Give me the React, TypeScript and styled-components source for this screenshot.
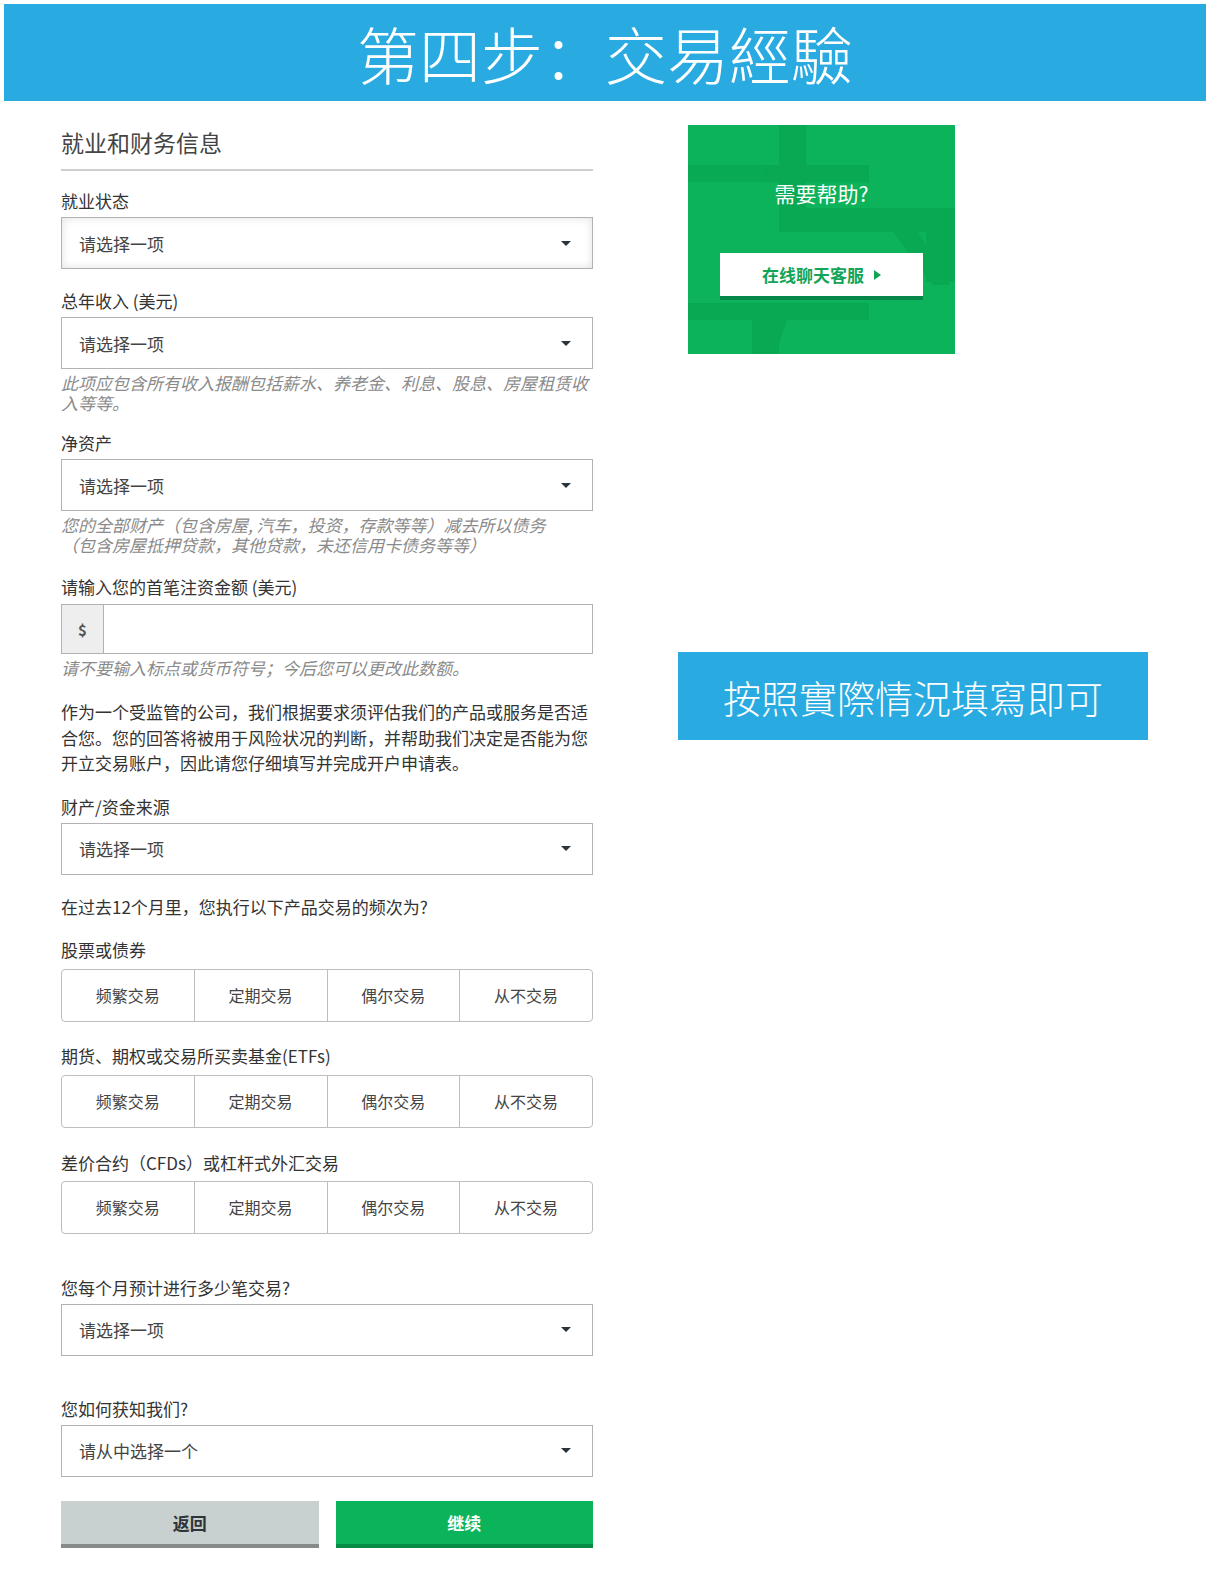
import React from 'react';
import styled, { createGlobalStyle } from 'styled-components';

const GlobalStyle = createGlobalStyle`
  body {
    margin: 0;
    background: #fff;
    font-family: "Noto Sans CJK SC", "Noto Sans", sans-serif;
    color: #333;
  }
`;

const Page = styled.div`
  width: 1208px;
  padding-bottom: 40px;
`;

const HeaderWrap = styled.div`
  padding: 4px 2px 0 4px;
`;

const Header = styled.h1`
  margin: 0;
  height: 97px;
  background: #29abe2;
  color: #fff;
  font-size: 62px;
  font-weight: 300;
  display: flex;
  align-items: center;
  justify-content: center;
`;

const Main = styled.div`
  display: flex;
  padding-left: 61px;
  gap: 85px;
`;

const FormColumn = styled.div`
  width: 532px;
  padding-top: 26px;
`;

const SectionTitle = styled.h2`
  margin: 0;
  font-size: 23px;
  line-height: 30px;
  font-weight: 400;
  color: #444;
`;

const Rule = styled.hr`
  margin: 12px 0 0;
  border: 0;
  height: 2px;
  background: #cfcfcf;
`;

const Label = styled.div<{ $top?: number }>`
  margin-top: ${(p) => p.$top ?? 20}px;
  font-size: 17px;
  line-height: 22px;
  color: #333;
`;

const SelectBox = styled.div<{ $focused?: boolean }>`
  margin-top: 5px;
  height: 52px;
  box-sizing: border-box;
  border: 1px solid #b2b2b2;
  padding: 0 21px 0 17px;
  display: flex;
  align-items: center;
  justify-content: space-between;
  font-size: 17px;
  color: #444;
  box-shadow: ${(p) => (p.$focused ? 'inset 0 0 8px rgba(0, 0, 0, 0.13)' : 'none')};
`;

const Caret = styled.span`
  width: 0;
  height: 0;
  border-left: 5px solid transparent;
  border-right: 5px solid transparent;
  border-top: 5px solid #2a343a;
`;

const Help = styled.div`
  margin-top: 4px;
  font-size: 17px;
  line-height: 20px;
  font-style: italic;
  color: #8a8a8a;
`;

const InputGroup = styled.div`
  margin-top: 6px;
  height: 50px;
  box-sizing: border-box;
  border: 1px solid #b2b2b2;
  display: flex;
`;

const Addon = styled.span`
  width: 41px;
  background: #eeeeee;
  border-right: 1px solid #b2b2b2;
  display: flex;
  align-items: center;
  justify-content: center;
  font-size: 15px;
  font-weight: 700;
  color: #555;
`;

const Paragraph = styled.p`
  margin: 21px 0 0;
  font-size: 17px;
  line-height: 25.5px;
  color: #333;
`;

const Choices = styled.div<{ $top?: number }>`
  margin-top: ${(p) => p.$top ?? 8}px;
  height: 53px;
  box-sizing: border-box;
  border: 1px solid #bdbdbd;
  border-radius: 4px;
  display: flex;
  overflow: hidden;
`;

const Choice = styled.div`
  flex: 1;
  display: flex;
  align-items: center;
  justify-content: center;
  font-size: 16px;
  color: #444;
  & + & {
    border-left: 1px solid #bdbdbd;
  }
`;

const Actions = styled.div`
  margin-top: 24px;
  display: flex;
  gap: 17px;
`;

const ActionButton = styled.div<{ $primary?: boolean }>`
  flex: 1;
  height: 47px;
  box-sizing: border-box;
  display: flex;
  align-items: center;
  justify-content: center;
  font-size: 17px;
  font-weight: 700;
  background: ${(p) => (p.$primary ? '#0bb45a' : '#c8d0d0')};
  color: ${(p) => (p.$primary ? '#fff' : '#2f3438')};
  border-bottom: 4px solid ${(p) => (p.$primary ? '#078c45' : '#858b8b')};
`;

const SideColumn = styled.div`
  display: flex;
  flex-direction: column;
  padding-top: 24px;
`;

const HelpCard = styled.div`
  position: relative;
  margin-left: 10px;
  width: 267px;
  height: 229px;
  background: #0cb35b;
  overflow: hidden;
  display: flex;
  flex-direction: column;
  align-items: center;
  padding-top: 53px;
  box-sizing: border-box;
`;

const CardPattern = styled.svg`
  position: absolute;
  inset: 0;
`;

const CardTitle = styled.div`
  position: relative;
  font-size: 21px;
  line-height: 30px;
  color: #fff;
`;

const ChatButton = styled.div`
  position: relative;
  margin-top: 45px;
  width: 203px;
  height: 47px;
  box-sizing: border-box;
  background: #fff;
  border-bottom: 4px solid #07864a;
  display: flex;
  align-items: center;
  justify-content: center;
  gap: 10px;
  font-size: 17px;
  font-weight: 700;
  color: #12a457;
`;

const PlayMark = styled.span`
  width: 0;
  height: 0;
  border-top: 5px solid transparent;
  border-bottom: 5px solid transparent;
  border-left: 7px solid #12a457;
`;

const Callout = styled.div`
  margin-top: 298px;
  width: 470px;
  height: 88px;
  background: #29abe2;
  color: #fff;
  font-size: 38px;
  font-weight: 300;
  display: flex;
  align-items: center;
  justify-content: center;
`;

const frequencies = ['频繁交易', '定期交易', '偶尔交易', '从不交易'];

const Select = ({ text, focused }: { text: string; focused?: boolean }) => (
  <SelectBox $focused={focused}>
    <span>{text}</span>
    <Caret />
  </SelectBox>
);

const FrequencyRow = ({ top }: { top?: number }) => (
  <Choices $top={top}>
    {frequencies.map((f) => (
      <Choice key={f}>{f}</Choice>
    ))}
  </Choices>
);

export default function App() {
  return (
    <Page>
      <GlobalStyle />
      <HeaderWrap>
        <Header>第四步：交易經驗</Header>
      </HeaderWrap>
      <Main>
        <FormColumn>
          <SectionTitle>就业和财务信息</SectionTitle>
          <Rule />

          <Label $top={19}>就业状态</Label>
          <Select text="请选择一项" focused />

          <Label $top={21}>总年收入 (美元)</Label>
          <Select text="请选择一项" />
          <Help>
            此项应包含所有收入报酬包括薪水、养老金、利息、股息、房屋租赁收
            <br />
            入等等。
          </Help>

          <Label $top={19}>净资产</Label>
          <Select text="请选择一项" />
          <Help>
            您的全部财产（包含房屋, 汽车，投资，存款等等）减去所以债务
            <br />
            （包含房屋抵押贷款，其他贷款，未还信用卡债务等等）
          </Help>

          <Label $top={21}>请输入您的首笔注资金额 (美元)</Label>
          <InputGroup>
            <Addon>$</Addon>
          </InputGroup>
          <Help>请不要输入标点或货币符号；今后您可以更改此数额。</Help>

          <Paragraph>
            作为一个受监管的公司，我们根据要求须评估我们的产品或服务是否适
            <br />
            合您。您的回答将被用于风险状况的判断，并帮助我们决定是否能为您
            <br />
            开立交易账户，因此请您仔细填写并完成开户申请表。
          </Paragraph>

          <Label $top={20}>财产/资金来源</Label>
          <Select text="请选择一项" />

          <Label $top={21}>在过去12个月里，您执行以下产品交易的频次为?</Label>

          <Label $top={21}>股票或债券</Label>
          <FrequencyRow />

          <Label $top={23}>期货、期权或交易所买卖基金(ETFs)</Label>
          <FrequencyRow />

          <Label $top={24}>差价合约（CFDs）或杠杆式外汇交易</Label>
          <FrequencyRow top={7} />

          <Label $top={43}>您每个月预计进行多少笔交易?</Label>
          <Select text="请选择一项" />

          <Label $top={42}>您如何获知我们?</Label>
          <Select text="请从中选择一个" />

          <Actions>
            <ActionButton>返回</ActionButton>
            <ActionButton $primary>继续</ActionButton>
          </Actions>
        </FormColumn>

        <SideColumn>
          <HelpCard>
            <CardPattern width="267" height="229" viewBox="0 0 267 229">
              <g fill="#08a651" opacity="0.7">
                <rect x="0" y="40" width="181" height="17" />
                <rect x="91" y="0" width="27" height="107" />
                <rect x="91" y="83" width="176" height="24" />
                <rect x="238" y="83" width="29" height="74" />
                <polygon points="205,107 230,107 262,160 245,160" />
                <rect x="0" y="178" width="181" height="17" />
                <rect x="64" y="195" width="27" height="34" />
                <polygon points="82,178 104,178 88,229 64,229" />
              </g>
            </CardPattern>
            <CardTitle>需要帮助?</CardTitle>
            <ChatButton>
              在线聊天客服
              <PlayMark />
            </ChatButton>
          </HelpCard>
          <Callout>按照實際情況填寫即可</Callout>
        </SideColumn>
      </Main>
    </Page>
  );
}
